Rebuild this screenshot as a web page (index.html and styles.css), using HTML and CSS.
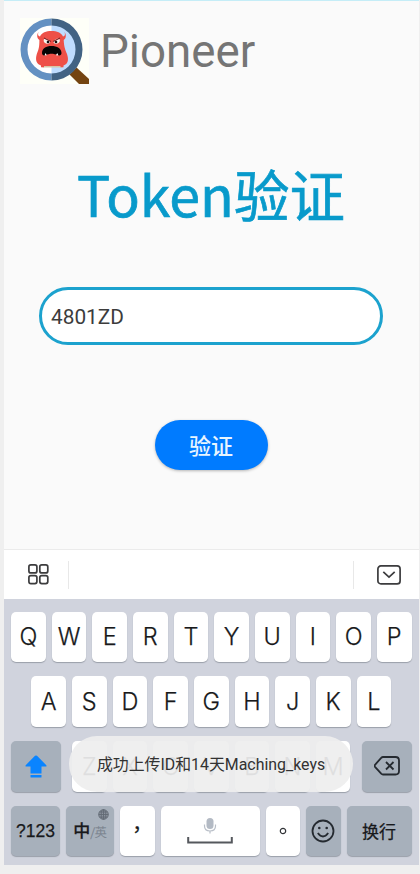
FILE: index.html
```html
<!DOCTYPE html>
<html lang="zh-CN">
<head>
<meta charset="utf-8">
<title>Pioneer</title>
<link rel="stylesheet" href="styles.css">
</head>
<body>
<div class="app">
  <header class="brand">
    <svg class="logo" width="69" height="66" viewBox="0 0 69 66">
      <rect width="69" height="66" fill="#fefff8"/>
      <path d="M49.500 56.500l7-7 12.500 11.500V66H59z" fill="#744411"/>
      <circle cx="31.500" cy="31.500" r="27" fill="#fff"/>
      <path d="M31.500 4a27.500 27.500 0 0 1 0 55z" fill="#bfdcff"/>
      <path d="M31.500 .5a31 31 0 0 0 0 62v-7a24 24 0 0 1 0-48z" fill="#6491c2"/>
      <path d="M31.500 .5a31 31 0 0 1 0 62v-7a24 24 0 0 0 0-48z" fill="#426384"/>
      <path d="M22.500 47.500h20v2h-20z" fill="#d6c7a8"/>
      <path d="M18.500 14c-1 2.500-.5 4 1.500 4.500 2-4 6-5.500 11.500-5.500s9.500 1.500 11.500 5.500c2-.5 2.500-2 1.500-4.500 2 2.800 1.700 6.500-.8 8 .4 7 1.300 9 3.300 14 2 6 1 10-3.500 11.500v1.700h-3v-1.200H24v1.200h-3v-1.700c-4.500-1.500-6-5.500-4.200-11.500 2-5 2.600-7 2.600-14-2.500-1.500-2.900-5.200-.9-8z" fill="#ee5048"/>
      <path d="M24 21c2-1 4 0 6.500 2.500a3.400 3.400 0 1 1-6.500-2.500zM39.500 21c-2-1-4 0-6.500 2.500a3.400 3.400 0 1 0 6.500-2.500z" fill="#f7f3ee"/>
      <path d="M24 20l7 3.500M40 20l-7 3.500" stroke="#861f21" stroke-width="1.200"/>
      <circle cx="28" cy="24" r="1.300" fill="#111"/><circle cx="36" cy="24" r="1.300" fill="#111"/>
      <path d="M22 35c0-4.500 4-7 9.500-7s10 2.500 10 7c0 2-1.500 3-3.500 2.200-5-2-8-2-12.500 0-2 .8-3.500-.2-3.500-2.200z" fill="#050404"/>
      <path d="M24.500 37.500l1-2.500 1.300 2.200zM36 37.300l1.200-2.300 1.300 2.500z" fill="#fff"/>
    </svg>
    <span class="brand-name">Pioneer</span>
  </header>
  <main class="form">
    <h1 class="title">Token<span class="title-zh">验证</span></h1>
    <div class="field">4801ZD</div>
    <div class="submit">验证</div>
  </main>
  <section class="keyboard">
    <div class="toolbar">
      <div class="tool tool-left">
        <svg width="21" height="21" viewBox="0 0 21 21" fill="none" stroke="#3c3c3e" stroke-width="1.700"><rect x=".9" y=".9" width="8" height="8" rx="2"/><rect x="11.800" y=".9" width="8" height="8" rx="2"/><rect x=".9" y="11.600" width="8" height="8" rx="2"/><rect x="11.800" y="11.600" width="8" height="8" rx="2"/></svg>
      </div>
      <div class="tool tool-right">
        <svg width="24" height="20" viewBox="0 0 24 20" fill="none" stroke="#3c3c3e" stroke-width="1.700"><rect x=".9" y=".9" width="22.200" height="18" rx="3"/><path d="M6.300 6.800l5.700 5.400 5.700-5.400"/></svg>
      </div>
    </div>
    <div class="keys">
      <div class="row"><div class="key">Q</div><div class="key">W</div><div class="key">E</div><div class="key">R</div><div class="key">T</div><div class="key">Y</div><div class="key">U</div><div class="key">I</div><div class="key">O</div><div class="key">P</div></div>
      <div class="row row-home"><div class="key">A</div><div class="key">S</div><div class="key">D</div><div class="key">F</div><div class="key">G</div><div class="key">H</div><div class="key">J</div><div class="key">K</div><div class="key">L</div></div>
      <div class="row row-shift">
        <div class="key dark side">
          <svg width="22" height="23" viewBox="0 0 22 23" fill="#0a84ff"><path d="M10 .8q1-.8 2 0l9.300 9.400q.8 1.300-.8 1.300H16.500v7h-11v-7H1.500q-1.600 0-.8-1.300zM5.500 20h11v2q0 .5-.5.500H6q-.5 0-.5-.5z"/></svg>
        </div>
        <div class="letters"><div class="key">Z</div><div class="key">X</div><div class="key">C</div><div class="key">V</div><div class="key">B</div><div class="key">N</div><div class="key">M</div></div>
        <div class="key dark side">
          <svg width="26" height="20" viewBox="0 0 26 20" fill="none" stroke="#252a30" stroke-width="1.800" stroke-linejoin="round"><path d="M9 1h12.500q3.500 0 3.500 3.500v10.500q0 3.500-3.500 3.500H9q-1 0-1.800-.8L1 10.800q-.8-1 0-2L7.200 1.800Q8 1 9 1z"/><path d="M12 6l7.500 7.500M19.500 6L12 13.500"/></svg>
        </div>
      </div>
      <div class="row row-bottom">
        <div class="key dark sym">?123</div>
        <div class="key dark lang"><span class="zh">中</span><span class="en">/英</span>
          <svg class="globe" width="11" height="11" viewBox="0 0 11 11" fill="#8b939e" stroke="#626a74" stroke-width=".9"><circle cx="5.500" cy="5.500" r="4.800"/><ellipse cx="5.500" cy="5.500" rx="2.300" ry="4.800"/><path d="M5.500 .7v9.600M.7 5.500h9.600M1.500 3h8M1.500 8h8"/></svg>
        </div>
        <div class="key comma">，</div>
        <div class="key space">
          <svg width="46" height="30" viewBox="0 0 46 30" fill="none"><rect x="19.500" y="1" width="7" height="11" rx="3.500" fill="#b3bac4"/><path d="M17.500 7.500v1.500q0 5 5.500 5t5.500-5V7.500M23 14v2.500" stroke="#b9bfc8" stroke-width="1.200"/><path d="M1.200 20v5.500h43.600V20" stroke="#55585d" stroke-width="2"/></svg>
        </div>
        <div class="key period"><svg width="8" height="8" viewBox="0 0 8 8"><circle cx="4" cy="4" r="2.700" fill="none" stroke="#303236" stroke-width="1.200"/></svg></div>
        <div class="key dark emoji">
          <svg width="24" height="24" viewBox="0 0 24 24" fill="none" stroke="#252a30" stroke-width="1.800"><circle cx="12" cy="12" r="10.500"/><path d="M6.800 14q5.200 7 10.400 0"/><circle cx="8.300" cy="9" r="1.300" fill="#252a30" stroke="none"/><circle cx="15.700" cy="9" r="1.300" fill="#252a30" stroke="none"/></svg>
        </div>
        <div class="key dark enter">换行</div>
      </div>
    </div>
  </section>
  <div class="toast">成功上传ID和14天Maching_keys</div>
</div>
</body>
</html>
```

FILE: styles.css
```css
* { box-sizing: border-box; }
body {
  margin: 0;
  background: #efefef;
  font-family: Roboto, "Noto Sans CJK SC", sans-serif;
}
.app {
  position: relative;
  width: 415px;
  height: 865px;
  margin-left: 4px;
  background: #fafafa;
  border-top: 1px solid #c5edf7;
  display: flex;
  flex-direction: column;
}
.brand {
  display: flex;
  align-items: flex-start;
  height: 98px;
  padding: 17px 0 0 16px;
}
.brand-name {
  margin-left: 11px;
  margin-top: 7px;
  font-size: 45.700px;
  line-height: 54px;
  color: #757575;
}
.form {
  flex: 1;
  display: flex;
  flex-direction: column;
  align-items: center;
  padding-right: 1px;
}
.title {
  margin: 52px 0 0;
  height: 84px;
  line-height: 84px;
  font-family: "Noto Sans CJK SC", sans-serif;
  font-size: 55.500px;
  font-weight: 400;
  color: #089acb;
  -webkit-text-stroke: .7px #089acb;
  white-space: nowrap;
}
.title-zh { font-size: 55.500px; }
.field {
  width: 344px;
  height: 58px;
  margin-top: 52px;
  padding-left: 9px;
  border: 2.500px solid #1ca2ce;
  border-width: 3px;
  border-radius: 29px;
  background: #fff;
  font-size: 20.800px;
  line-height: 55px;
  color: #3c3c3c;
}
.submit {
  width: 113px;
  height: 50px;
  margin-top: 75px;
  border-radius: 25px;
  background: #007bff;
  box-shadow: 0 1px 3px rgba(0, 0, 0, .28);
  color: #e8f5ff;
  font-family: "Noto Sans CJK SC", sans-serif;
  font-size: 22px;
  font-weight: 500;
  line-height: 48px;
  text-align: center;
}
.toolbar {
  height: 50px;
  border-top: 1px solid #ebebeb;
  background: #fff;
  display: flex;
  justify-content: space-between;
  align-items: center;
}
.tool {
  height: 28px;
  display: flex;
  align-items: center;
}
.tool-left { width: 65px; padding-left: 24px; border-right: 1px solid #e8e8e8; }
.tool-right { width: 66px; padding-left: 23px; border-left: 1px solid #e8e8e8; }
.keys {
  height: 266px;
  padding: 12.500px 7.500px 0 7px;
  background: #d0d3dd;
  display: flex;
  flex-direction: column;
  gap: 14px;
}
.row, .letters {
  display: flex;
  gap: 6px;
}
.row { height: 50.800px; }
.letters { width: 278.500px; }
.row-home { padding: 0 20.300px; }
.row-shift { justify-content: space-between; }
.key {
  position: relative;
  flex: 1 1 0;
  min-width: 0;
  height: 50.500px;
  border-radius: 5px;
  background: #fff;
  box-shadow: 0 1px 1px #9a9fa9;
  display: flex;
  align-items: center;
  justify-content: center;
  font-family: Inter, "Liberation Sans", sans-serif;
  font-size: 23.500px;
  font-weight: 300;
  -webkit-text-stroke: .25px currentColor;
  color: #18191b;
}
.dark { background: #a7b0bb; }
.side { flex: 0 0 49.500px; }
.sym { flex: 0 0 49px; font-family: "Liberation Sans", sans-serif; font-size: 17.500px; font-weight: 400; }
.lang { flex: 0 0 48px; align-items: baseline; font-family: "Noto Sans CJK SC", sans-serif; line-height: 48px; }
.zh { font-size: 17px; font-weight: 500; }
.en { font-size: 12px; color: #77808b; }
.globe { position: absolute; top: 3px; right: 5px; }
.comma { flex: 0 0 34.500px; font-family: "Noto Sans CJK SC", sans-serif; font-size: 20px; font-weight: 400; padding: 0 0 17px 10px; }
.period, .emoji { flex: 0 0 34.500px; }
.period { padding-bottom: 1px; }
.space { padding-top: 1px; }
.enter { flex: 0 0 65px; font-family: "Noto Sans CJK SC", sans-serif; font-size: 17px; font-weight: 400; padding-bottom: 2px; }
.toast {
  position: absolute;
  left: 65px;
  top: 735px;
  width: 284px;
  height: 56px;
  border-radius: 28px;
  background: rgba(238, 238, 238, .93);
  color: #323232;
  font-size: 15.900px;
  line-height: 58px;
  text-align: center;
  white-space: nowrap;
}
```
